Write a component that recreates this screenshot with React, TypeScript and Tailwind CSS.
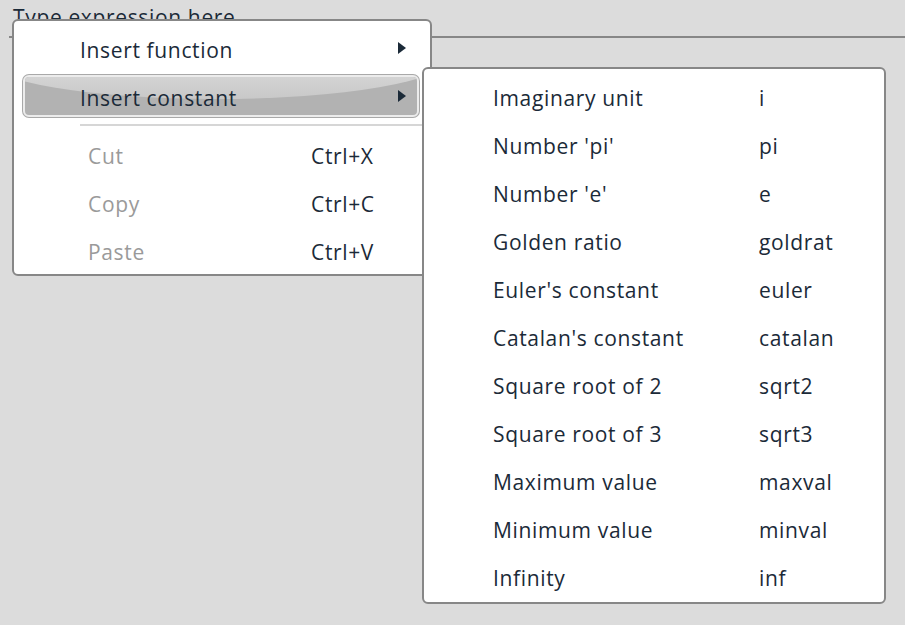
import React from "react";

const font = { fontFamily: '"Open Sans", "Noto Sans", sans-serif' };

function Arrow() {
  return (
    <svg width="8" height="12" viewBox="0 0 8 12" className="block">
      <polygon points="0,0 8,6 0,12" fill="#1b2a38" />
    </svg>
  );
}

const constants: [string, string][] = [
  ["Imaginary unit", "i"],
  ["Number 'pi'", "pi"],
  ["Number 'e'", "e"],
  ["Golden ratio", "goldrat"],
  ["Euler's constant", "euler"],
  ["Catalan's constant", "catalan"],
  ["Square root of 2", "sqrt2"],
  ["Square root of 3", "sqrt3"],
  ["Maximum value", "maxval"],
  ["Minimum value", "minval"],
  ["Infinity", "inf"],
];

export default function App() {
  return (
    <div
      className="relative w-[905px] h-[625px] bg-[#dcdcdc] overflow-hidden text-[21px] tracking-[0.65px] text-[#1b2a38]"
      style={font}
    >
      <div className="ml-[9px] pl-[4px] h-[38px] border-b-[2px] border-[#878787] leading-[34px] text-[#1b2a38]">
        Type expression here
      </div>

      {/* Main context menu */}
      <div className="absolute left-[12px] top-[19px] w-[420px] bg-white border-[2px] border-[#878787] rounded-[6px] pt-[6px] pb-[3px]">
        <div className="ml-[9px] mr-[11px] h-[42px] mb-[6px] flex items-center pl-[57px] pr-[13px] pt-[6px]">
          <span className="flex-1">Insert function</span>
          <span className="-mt-[6px]">
            <Arrow />
          </span>
        </div>
        <div className="relative overflow-hidden ml-[9px] mr-[11px] h-[42px] flex items-center pl-[55px] pr-[11px] pt-[6px] rounded-[6px] border-[2px] border-[#ececec] shadow-[0_0_0_1px_#a9a9a9] bg-[#b2b2b2]">
          <div className="absolute left-[-40px] right-[-30px] top-[-58px] h-[80px] rounded-[50%] bg-[linear-gradient(to_bottom,#e4e4e4_0%,#d4d4d4_70%,#c8c8c8_100%)]" />
          <span className="relative flex-1">Insert constant</span>
          <span className="relative -mt-[6px]">
            <Arrow />
          </span>
        </div>
        <div className="ml-[66px] mr-[2px] mt-[7px] h-[2px] bg-[#d6d6d6] mb-[7px]" />
        {[
          ["Cut", "Ctrl+X"],
          ["Copy", "Ctrl+C"],
          ["Paste", "Ctrl+V"],
        ].map(([a, b], i) => (
          <div
            key={a}
            className={`ml-[9px] mr-[11px] h-[42px] flex items-center pl-[65px] pt-[6px] ${i < 2 ? "mb-[6px]" : ""}`}
          >
            <span className="w-[223px] text-[#9a9a9a]">{a}</span>
            <span>{b}</span>
          </div>
        ))}
      </div>

      {/* Submenu */}
      <div className="absolute left-[422px] top-[67px] w-[464px] bg-white border-[2px] border-[#878787] rounded-[6px] pt-[6px] pb-[5px] flex flex-col gap-[6px]">
        {constants.map(([a, b]) => (
          <div key={a} className="h-[42px] flex items-center pl-[69px] pt-[6px]">
            <span className="w-[266px]">{a}</span>
            <span>{b}</span>
          </div>
        ))}
      </div>
    </div>
  );
}
